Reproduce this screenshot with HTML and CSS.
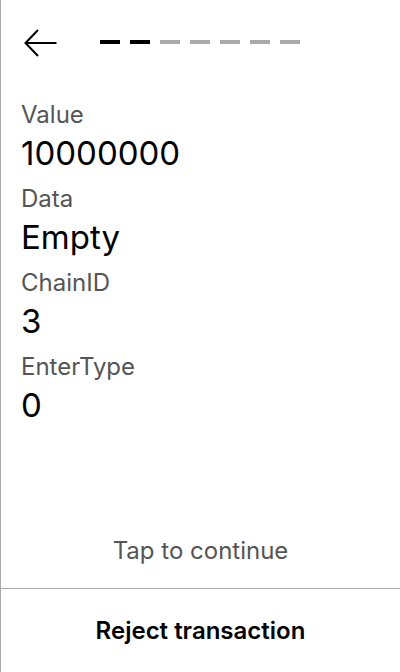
FILE: index.html
```html
<!DOCTYPE html>
<html>
<head>
<meta charset="utf-8">
<link rel="stylesheet" href="styles.css">
</head>
<body>
<div class="screen">
  <header class="header">
    <svg class="back" width="34" height="28" viewBox="0 0 34 28" fill="none" stroke="#000" stroke-width="2">
      <path d="M14 1 L1.5 14 L14 27"/>
      <path d="M1.5 14 H32.5"/>
    </svg>
    <div class="steps">
      <span class="step done"></span>
      <span class="step done"></span>
      <span class="step"></span>
      <span class="step"></span>
      <span class="step"></span>
      <span class="step"></span>
      <span class="step"></span>
    </div>
  </header>
  <main class="fields">
    <div class="field"><div class="label">Value</div><div class="value">10000000</div></div>
    <div class="field"><div class="label">Data</div><div class="value">Empty</div></div>
    <div class="field"><div class="label">ChainID</div><div class="value">3</div></div>
    <div class="field"><div class="label">EnterType</div><div class="value">0</div></div>
  </main>
  <div class="tap">Tap to continue</div>
  <div class="reject">Reject transaction</div>
</div>
</body>
</html>
```

FILE: styles.css
```css
html, body {
  margin: 0;
  padding: 0;
  background: #fff;
}
.screen {
  width: 400px;
  height: 672px;
  box-sizing: border-box;
  border-left: 1px solid #aaa;
  display: flex;
  flex-direction: column;
  font-family: Inter, "Noto Sans", sans-serif;
  color: #000;
}
.header {
  display: flex;
  align-items: center;
  padding: 29px 0 0 23px;
  height: 28px;
}
.back {
  display: block;
  flex: none;
}
.steps {
  display: flex;
  gap: 10px;
  margin-left: 42px;
  margin-top: -2px;
}
.step {
  width: 20px;
  height: 4px;
  background: #aaa;
}
.step.done {
  background: #000;
}
.fields {
  flex: 1;
  display: flex;
  flex-direction: column;
  gap: 7px;
  padding: 41px 0 0 20px;
}
.label {
  font-size: 24px;
  line-height: 34px;
  color: #555;
}
.value {
  font-size: 33px;
  line-height: 43px;
}
.tap {
  text-align: center;
  font-size: 24px;
  line-height: 28px;
  color: #555;
  margin-bottom: 23px;
}
.reject {
  border-top: 1px solid #aaa;
  height: 82px;
  line-height: 82px;
  padding-top: 1px;
  text-align: center;
  font-size: 24px;
  font-weight: 600;
}
```
